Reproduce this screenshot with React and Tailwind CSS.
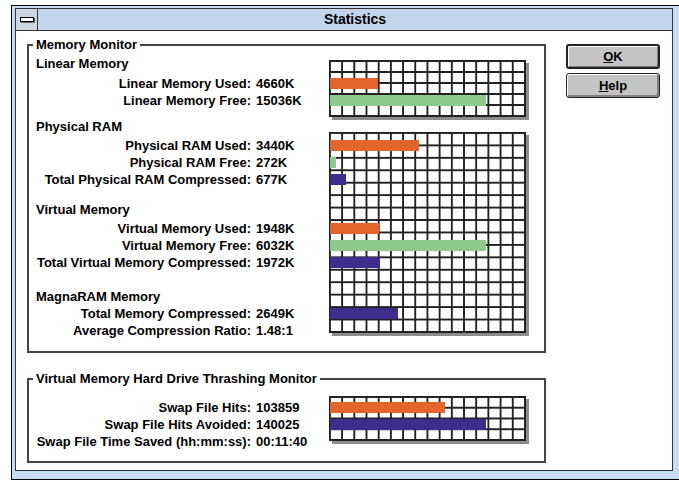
import React from 'react';

const gridBg =
  'bg-[linear-gradient(to_right,#222_2px,transparent_2px),linear-gradient(to_bottom,#222_2px,transparent_2px)] border-r-2 border-b-2 border-[#222] bg-white shadow-[3px_3px_0_#8c8c8c]';

function Line({ label, value, className = '' }) {
  return (
    <div className={`flex h-[17px] leading-[17px] whitespace-nowrap ${className}`}>
      <span className="w-[218px] text-right">{label}</span>
      <span className="pl-[5px]">{value}</span>
    </div>
  );
}

function Heading({ children, className = '' }) {
  return <div className={`ml-[3px] h-[17px] leading-[17px] ${className}`}>{children}</div>;
}

function Bar({ w, color, className = '' }) {
  return <div className={`h-[11px] ml-[1px] ${color} ${className}`} style={{ width: w }} />;
}

const orange = 'bg-[#e4652c]';
const green = 'bg-[#8cc98a]';
const purple = 'bg-[#3e2d8f]';

export default function App() {
  return (
    <div className="w-[679px] h-[483px] bg-white overflow-hidden pt-[5px] pl-[11px] font-['Liberation_Sans',Arial,sans-serif] font-bold text-[13px] text-black">
      <div className="w-[669px] h-[475px] border border-black bg-[#c9dbf2] pt-[2px] pl-[3px] pr-[6px] pb-[8px]">
        <div className="h-full border border-[#333] flex flex-col bg-white">
          {/* Title bar */}
          <div className="h-[22px] flex border-b border-[#333] bg-[#c3d5ed]">
            <div className="w-[22px] border-r border-[#333] flex items-center justify-center bg-[#cdd7e4]">
              <div className="w-[14px] h-[5px] border border-black bg-white shadow-[1px_1px_0_#666]" />
            </div>
            <div className="flex-1 flex items-center justify-center text-[14px]">Statistics</div>
          </div>

          {/* Client */}
          <div className="flex-1 flex">
            <div className="ml-[11px] w-[519px] flex flex-col">
              <fieldset className="mt-[5px] border-2 border-[#444] pl-[4px] pb-[12px]">
                <legend className="px-[3px] leading-[17px]">Memory Monitor</legend>
                <div className="flex">
                  <div className="w-[296px] flex flex-col">
                    <Heading className="mt-[2px]">Linear Memory</Heading>
                    <Line className="mt-[3px]" label="Linear Memory Used:" value="4660K" />
                    <Line label="Linear Memory Free:" value="15036K" />

                    <Heading className="mt-[9px]">Physical RAM</Heading>
                    <Line className="mt-[2px]" label="Physical RAM Used:" value="3440K" />
                    <Line label="Physical RAM Free:" value="272K" />
                    <Line label="Total Physical RAM Compressed:" value="677K" />

                    <Heading className="mt-[13px]">Virtual Memory</Heading>
                    <Line className="mt-[2px]" label="Virtual Memory Used:" value="1948K" />
                    <Line label="Virtual Memory Free:" value="6032K" />
                    <Line label="Total Virtual Memory Compressed:" value="1972K" />

                    <Heading className="mt-[17px]">MagnaRAM Memory</Heading>
                    <Line label="Total Memory Compressed:" value="2649K" />
                    <Line label="Average Compression Ratio:" value="1.48:1" />
                  </div>

                  <div className="flex flex-col">
                    <div className={`mt-[7px] w-[197px] h-[57px] flex flex-col [background-size:6.25%_20%] ${gridBg}`}>
                      <Bar className="mt-[18px]" w={48} color={orange} />
                      <Bar className="mt-[6px]" w={156} color={green} />
                    </div>
                    <div className={`mt-[15px] w-[197px] h-[201px] flex flex-col [background-size:6.25%_6.25%] ${gridBg}`}>
                      <Bar className="mt-[8px]" w={89} color={orange} />
                      <Bar className="mt-[6px]" w={6} color={green} />
                      <Bar className="mt-[6px]" w={16} color={purple} />
                      <Bar className="mt-[38px]" w={49} color={orange} />
                      <Bar className="mt-[6px]" w={156} color={green} />
                      <Bar className="mt-[6px]" w={50} color={purple} />
                      <Bar className="mt-[40px]" w={68} color={purple} />
                    </div>
                  </div>
                </div>
              </fieldset>

              <fieldset className="mt-[17px] border-2 border-[#444] pl-[4px] pb-[11px]">
                <legend className="px-[3px] leading-[17px]">Virtual Memory Hard Drive Thrashing Monitor</legend>
                <div className="flex">
                  <div className="w-[296px] flex flex-col">
                    <Line className="mt-[12px]" label="Swap File Hits:" value="103859" />
                    <Line label="Swap File Hits Avoided:" value="140025" />
                    <Line label="Swap File Time Saved (hh:mm:ss):" value="00:11:40" />
                  </div>
                  <div className={`mt-[9px] w-[197px] h-[45px] flex flex-col [background-size:6.25%_25%] ${gridBg}`}>
                    <Bar className="mt-[6px]" w={115} color={orange} />
                    <Bar className="mt-[6px]" w={156} color={purple} />
                  </div>
                </div>
              </fieldset>
            </div>

            {/* Buttons */}
            <div className="ml-[20px] w-[94px] flex flex-col">
              <button className="mt-[13px] h-[25px] rounded-[3px] border-2 border-[#222] bg-[#c4c4c4] shadow-[inset_1px_1px_0_#fff,inset_-1px_-1px_0_#808080] text-[13px] font-bold">
                <span className="underline">O</span>K
              </button>
              <button className="mt-[4px] h-[25px] rounded-[3px] border border-[#222] bg-[#c4c4c4] shadow-[inset_1px_1px_0_#fff,inset_-2px_-2px_0_#808080] text-[13px] font-bold">
                <span className="underline">H</span>elp
              </button>
            </div>
          </div>
        </div>
      </div>
    </div>
  );
}
